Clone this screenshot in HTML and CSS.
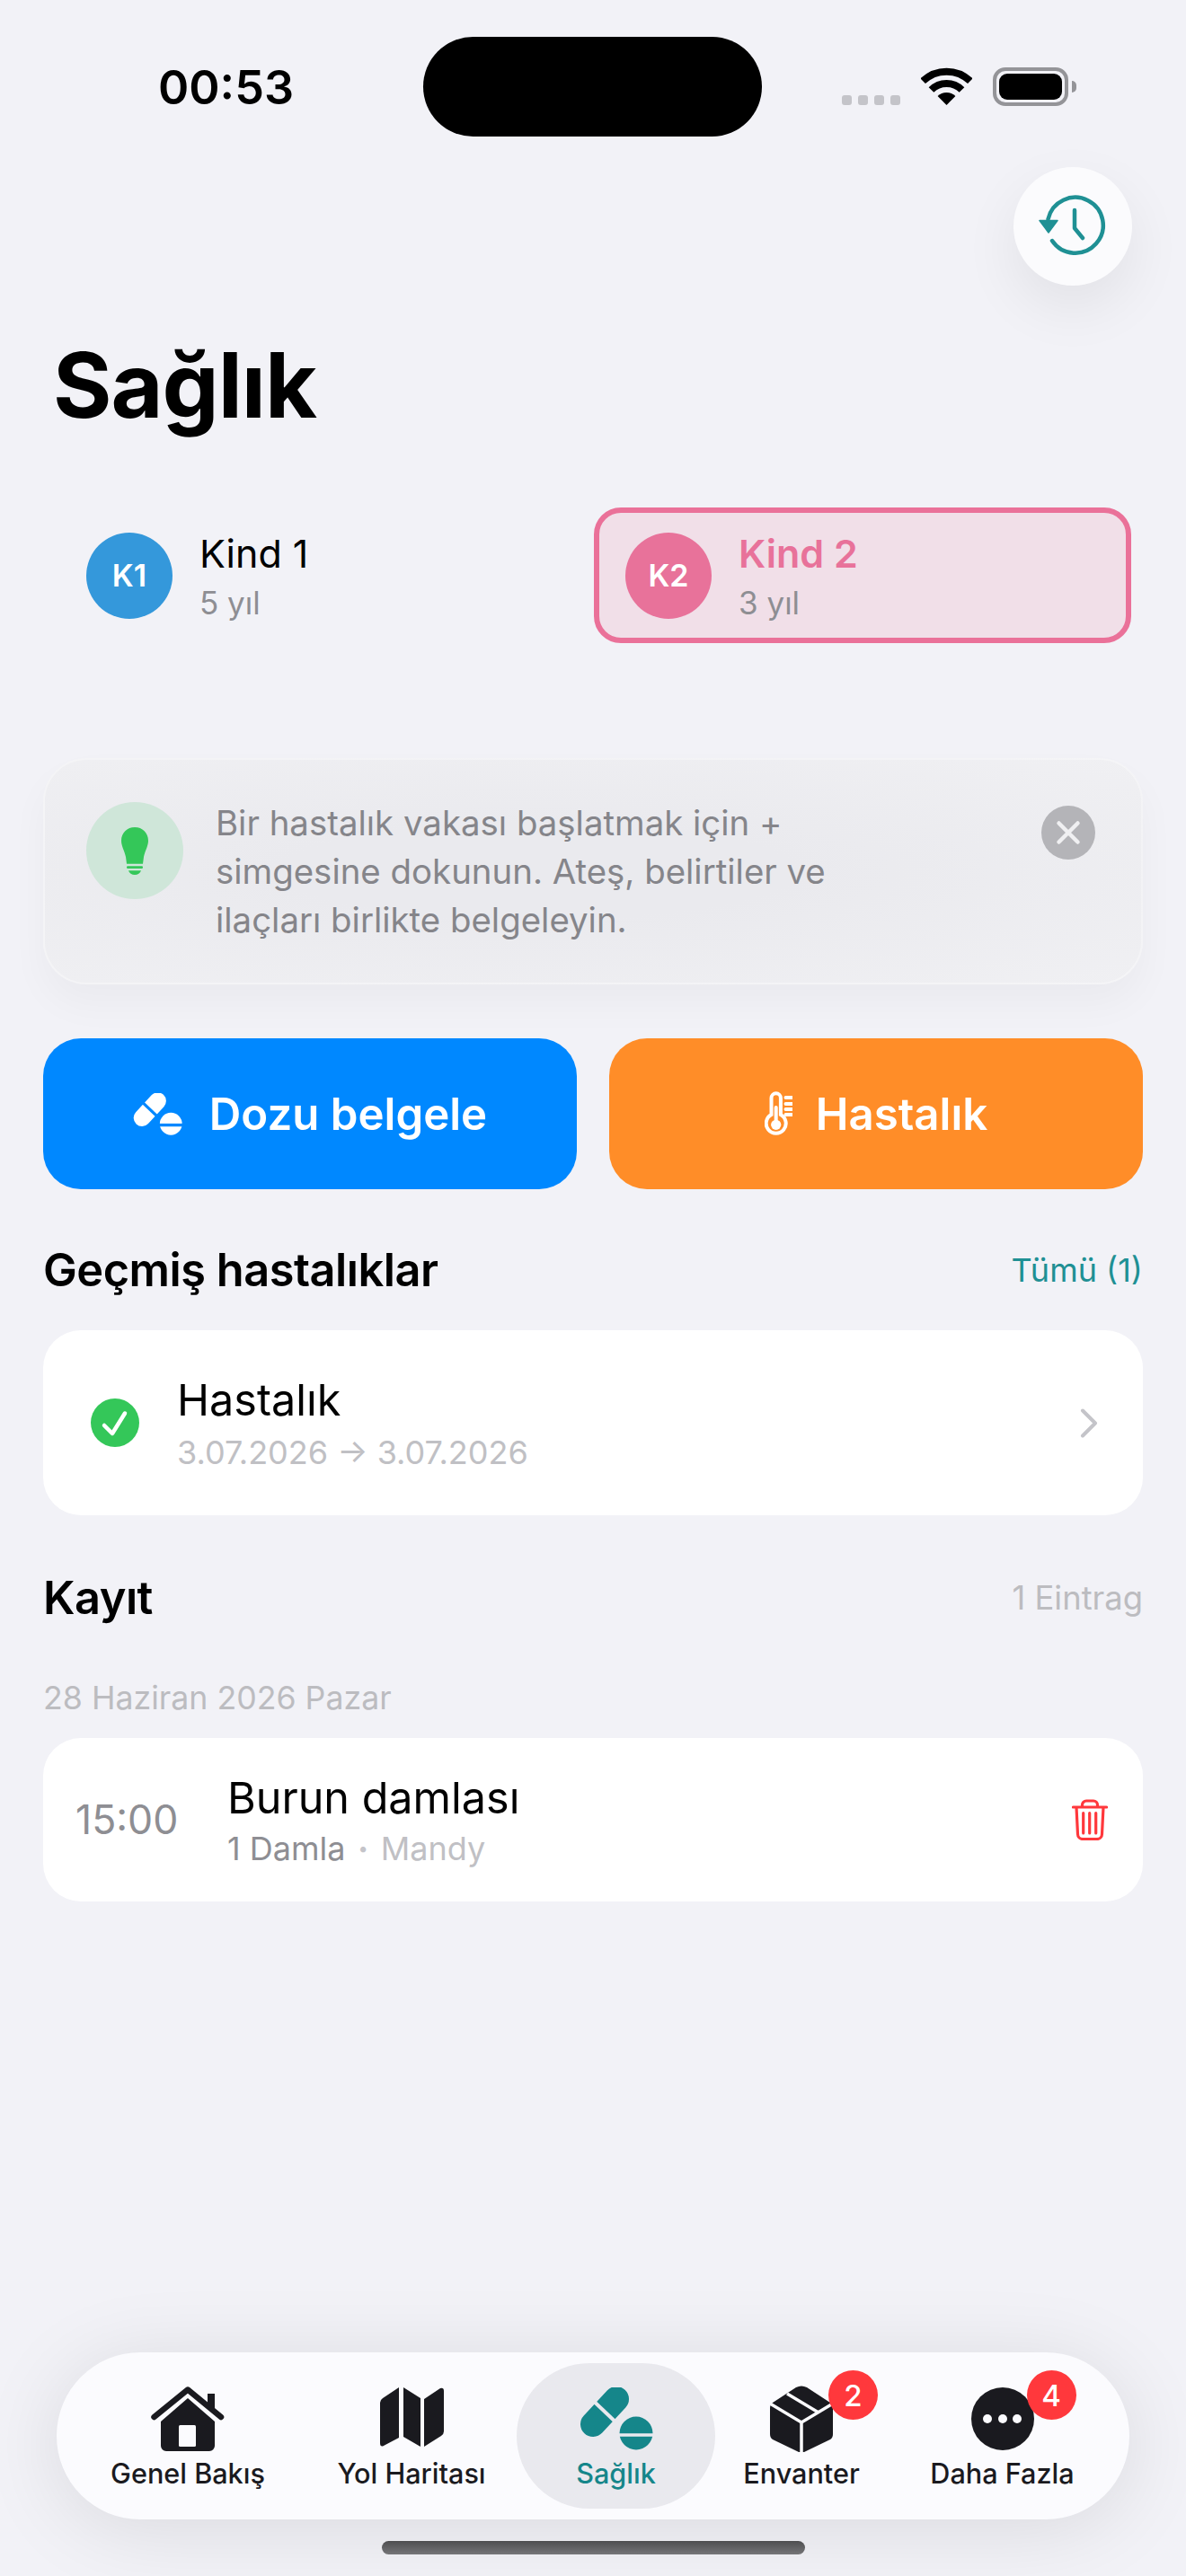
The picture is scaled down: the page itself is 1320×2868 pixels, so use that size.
FILE: index.html
```html
<!DOCTYPE html>
<html lang="tr">
<head>
<meta charset="utf-8">
<title>Sağlık</title>
<link rel="stylesheet" href="styles.css">
</head>
<body>
<div class="screen">
  <div class="island"></div>
  <header class="status">
    <span class="time">00:53</span>
    <div class="status-right">
      <div class="signal"><i></i><i></i><i></i><i></i></div>
      <svg class="wifi" viewBox="0 0 57 42"><path class="wifi-arc" d="M2.2 15.2A38 38 0 0 1 54.8 15.2"/><path class="wifi-arc" d="M11.5 25A24 24 0 0 1 45.5 25"/><path class="wifi-fill" d="M28.5 42L18.6 32A14 14 0 0 1 38.4 32Z"/></svg>
      <div class="battery"><div class="battery-level"></div></div>
      <div class="battery-cap"></div>
    </div>
  </header>

  <div class="history-row">
    <button class="history-btn">
      <svg class="history-icon" viewBox="0 0 80 80"><path class="hist-line" d="M17 56A31 31 0 1 0 12.5 32"/><path class="hist-head" d="M3 33.500H23L13 47Z"/><path class="hist-line" d="M42 22V42L51 53"/></svg>
    </button>
  </div>

  <h1 class="title">Sağlık</h1>

  <div class="kids">
    <div class="kid">
      <div class="avatar avatar-blue">K1</div>
      <div class="kid-text"><div class="kid-name">Kind 1</div><div class="kid-age">5 yıl</div></div>
    </div>
    <div class="kid kid-active">
      <div class="avatar avatar-pink">K2</div>
      <div class="kid-text"><div class="kid-name kid-name-active">Kind 2</div><div class="kid-age">3 yıl</div></div>
    </div>
  </div>

  <main class="content">
    <section class="hint">
      <div class="hint-icon">
        <svg class="bulb" viewBox="0 0 30 53"><path d="M15 0C23.500 0 30 6.200 30 15C30 21 26.500 26 25 33L24 40.700H6L5 33C3.500 26 0 21 0 15C0 6.200 6.500 0 15 0Z"/><rect x="6" y="43.200" width="18" height="2.800" rx="1.200"/><path d="M8 48.200H22C21 51.400 18.400 53 15 53C11.600 53 9 51.400 8 48.200Z"/></svg>
      </div>
      <p class="hint-text">Bir hastalık vakası başlatmak için +<br>simgesine dokunun. Ateş, belirtiler ve<br>ilaçları birlikte belgeleyin.</p>
      <div class="hint-close">
        <svg viewBox="0 0 30 30" class="close-x"><path d="M4.500 4.500L25.500 25.500M25.500 4.500L4.500 25.500"/></svg>
      </div>
    </section>

    <div class="actions">
      <button class="action action-blue">
        <svg class="action-pills" viewBox="0 0 82 70"><path class="pill-white" d="M15 41L41 13"/><path class="pill-gap-blue" d="M8 8L48 46"/><circle class="pill-dot-white" cx="63" cy="51" r="18.500"/><path class="pill-gap-blue" d="M42 53H84"/></svg>
        <span>Dozu belgele</span>
      </button>
      <button class="action action-orange">
        <svg class="action-thermo" viewBox="0 0 31 50"><path class="thermo-line" d="M7.500 26V7.500a5.200 5.200 0 0 1 10.400 0V26A11 11 0 1 1 7.500 26Z"/><circle class="thermo-fill" cx="12.700" cy="37.300" r="5.600"/><path class="thermo-line" d="M12.700 18V36M23.500 7H31M23.500 14H31M23.500 20H31M23.500 26H31"/></svg>
        <span>Hastalık</span>
      </button>
    </div>

    <div class="sec-head sec-head-first">
      <h2 class="sec-title">Geçmiş hastalıklar</h2>
      <span class="sec-link">Tümü (1)</span>
    </div>
    <div class="card illness">
      <svg class="check" viewBox="0 0 54 54"><circle cx="27" cy="27" r="27"/><path d="M15 30L24 39L38 16.500"/></svg>
      <div class="illness-text">
        <div class="card-title">Hastalık</div>
        <div class="illness-dates">3.07.2026 → 3.07.2026</div>
      </div>
      <svg class="chevron" viewBox="0 0 20 33"><path d="M3 2.500L17 16.500L3 30.500"/></svg>
    </div>

    <div class="sec-head sec-head-log">
      <h2 class="sec-title">Kayıt</h2>
      <span class="sec-count">1 Eintrag</span>
    </div>
    <div class="log-date">28 Haziran 2026 Pazar</div>
    <div class="card log">
      <div class="log-time">15:00</div>
      <div class="log-text">
        <div class="card-title">Burun damlası</div>
        <div class="log-meta"><span class="log-dose">1 Damla</span><span class="log-dot">•</span><span class="log-who">Mandy</span></div>
      </div>
      <svg class="trash" viewBox="0 0 40 46"><path d="M1.500 9H38.500M11.500 9V6.500a4.500 4.500 0 0 1 4.500-4.500h8a4.500 4.500 0 0 1 4.500 4.500V9M5 9L6.500 39a5.500 5.500 0 0 0 5.500 5.500H28a5.500 5.500 0 0 0 5.500-5.500L35 9M12.700 15.500V38M19.700 15.500V38M26.700 15.500V38"/></svg>
    </div>
  </main>

  <nav class="tabbar">
    <div class="tab">
      <svg class="tab-icon icon-home" viewBox="0 0 82 72"><path class="home-roof" d="M3.500 34L41 3.500L78 34"/><path class="tab-fill" d="M63 8h8v18l-8-6.500ZM41 13L71 39V66a6 6 0 0 1-6 6H17a6 6 0 0 1-6-6V39Z"/><rect class="home-door" x="31" y="43" width="19" height="24" rx="1.500"/></svg>
      <span class="tab-label">Genel Bakış</span>
    </div>
    <div class="tab">
      <svg class="tab-icon icon-map" viewBox="0 0 71 66"><path class="tab-fill" d="M21 0V56L3 65.500Q0 66 0 62V17Q0 14 3 12ZM26 0L45 12V66L26 55ZM49 13L67 1Q71 0 71 4V49Q71 52 68 54L49 66Z"/></svg>
      <span class="tab-label">Yol Haritası</span>
    </div>
    <div class="tab tab-active">
      <svg class="tab-icon icon-pills" viewBox="0 0 82 70"><path class="pill-teal" d="M15 41L41 13"/><path class="pill-gap-gray" d="M8 8L48 46"/><circle class="pill-dot-teal" cx="63" cy="51" r="18.500"/><path class="pill-gap-gray-thin" d="M42 53H84"/></svg>
      <span class="tab-label">Sağlık</span>
    </div>
    <div class="tab">
      <span class="tab-icon-wrap">
        <svg class="tab-icon icon-box" viewBox="0 0 70 74"><path class="tab-fill" d="M29 2Q35 -1 41 2L67 19Q70 21 70 25V54Q70 58 67 60L38 74H32L3 60Q0 58 0 54V25Q0 21 3 19Z"/><path class="box-line" d="M0 20L35 41L70 20M35 41V74M19 9L54 30"/></svg>
        <span class="badge badge-box">2</span>
      </span>
      <span class="tab-label">Envanter</span>
    </div>
    <div class="tab">
      <span class="tab-icon-wrap">
        <svg class="tab-icon icon-more" viewBox="0 0 70 70"><circle class="tab-fill" cx="35" cy="35" r="35"/><circle class="more-dot" cx="18" cy="35" r="5"/><circle class="more-dot" cx="35" cy="35" r="5"/><circle class="more-dot" cx="51" cy="35" r="5"/></svg>
        <span class="badge badge-more">4</span>
      </span>
      <span class="tab-label">Daha Fazla</span>
    </div>
  </nav>
  <div class="home-indicator"></div>
</div>
</body>
</html>
```

FILE: styles.css
```css
* { box-sizing: border-box; margin: 0; padding: 0; }
html, body { width: 1320px; height: 2868px; overflow: hidden; }
body { font-family: Inter, "Liberation Sans", sans-serif; background: #f2f2f7; color: #000; }
button { border: 0; font: inherit; color: inherit; }

.screen { position: relative; width: 1320px; height: 2868px; overflow: hidden; background: #f2f2f7; }

.island { position: absolute; left: 471px; top: 41px; width: 377px; height: 111px; border-radius: 56px; background: #000; }

.status { height: 186px; padding: 74px 122px 0 176px; display: flex; justify-content: space-between; align-items: flex-start; }
.time { font-size: 52px; line-height: 48px; font-weight: 600; letter-spacing: 0; }
.status-right { display: flex; align-items: flex-end; height: 44px; }
.signal { display: flex; gap: 7px; margin-right: 23px; margin-bottom: 1px; }
.signal i { display: block; width: 11px; height: 11px; border-radius: 3px; background: #c4c4c9; }
.wifi { width: 57px; height: 42px; margin-right: 23px; margin-bottom: 1px; }
.wifi-arc { fill: none; stroke: #000; stroke-width: 8; }
.wifi-fill { fill: #000; }
.battery { width: 84px; height: 43px; border: 4px solid #949498; border-radius: 14px; padding: 3px; }
.battery-level { width: 100%; height: 100%; background: #000; border-radius: 9px; }
.battery-cap { width: 5px; height: 13px; margin: 0 0 15px 4px; background: #949498; border-radius: 0 5px 5px 0; }

.history-row { display: flex; justify-content: flex-end; padding-right: 60px; }
.history-btn { width: 132px; height: 132px; border-radius: 50%; background: #fbfbfd; box-shadow: 0 24px 64px rgba(0,0,0,.07); display: flex; align-items: center; justify-content: center; }
.history-icon { width: 80px; height: 80px; }
.hist-line { fill: none; stroke: #1f9094; stroke-width: 4.500; stroke-linecap: round; stroke-linejoin: round; }
.hist-head { fill: #1f9094; stroke: #1f9094; stroke-width: 1.500; stroke-linejoin: round; }

.title { margin: 53px 0 0 59px; font-size: 100px; line-height: 116px; font-weight: 700; letter-spacing: -1px; height: 116px; }

.kids { margin-top: 78px; padding: 0 61px; display: grid; grid-template-columns: 580px 598px; gap: 20px; }
.kid { height: 151px; padding: 0 35px; display: flex; align-items: center; gap: 30px; border-radius: 30px; }
.kid-active { background: #f1dfe8; border: 6px solid #ea7199; padding: 0 29px; }
.avatar { width: 96px; height: 96px; border-radius: 50%; color: #fff; font-size: 34px; font-weight: 600; display: flex; align-items: center; justify-content: center; flex: none; }
.avatar-blue { background: #3498db; }
.avatar-pink { background: #e8729a; }
.kid-name { font-size: 43px; line-height: 52px; font-weight: 400; }
.kid-name-active { color: #e8729a; font-weight: 600; }
.kid-age { font-size: 35px; line-height: 42px; margin-top: 8px; color: #8e8e93; }

.content { padding: 0 48px; margin-top: 128px; }

.hint { height: 252px; border-radius: 48px; border: 2px solid rgba(255,255,255,.35); background: radial-gradient(ellipse at 45% 50%, #eaeaee 30%, #f0f0f3 100%); box-shadow: 0 22px 44px rgba(0,0,0,.035); padding: 47px 51px 0 46px; display: flex; align-items: flex-start; }
.hint-icon { width: 108px; height: 108px; border-radius: 50%; background: #cfe6d9; display: flex; align-items: center; justify-content: center; flex: none; }
.bulb { width: 30px; height: 53px; fill: #34c759; }
.hint-text { margin: -4px 0 0 36px; flex: 1; font-size: 38.400px; line-height: 54px; color: #85858a; }
.hint-close { width: 60px; height: 60px; border-radius: 50%; background: #b4b4b8; display: flex; align-items: center; justify-content: center; flex: none; margin-top: 4px; }
.close-x { width: 30px; height: 30px; fill: none; stroke: #f0f0f2; stroke-width: 4.500; stroke-linecap: round; }

.actions { margin-top: 60px; display: grid; grid-template-columns: 594px 594px; gap: 36px; }
.action { height: 168px; border-radius: 42px; color: #fff; font-size: 49.200px; font-weight: 600; display: flex; align-items: center; justify-content: center; gap: 30px; }
.action-blue { background: #0088ff; }
.action-orange { background: #ff8d28; gap: 26px; }
.action-pills { width: 55px; height: 47px; }
.action-thermo { width: 31px; height: 50px; }
.pill-white { fill: none; stroke: #fff; stroke-width: 28; stroke-linecap: round; }
.pill-dot-white { fill: #fff; }
.pill-gap-blue { fill: none; stroke: #0088ff; stroke-width: 5; }
.thermo-line { fill: none; stroke: #fff; stroke-width: 4; stroke-linecap: round; }
.thermo-fill { fill: #fff; }

.sec-head { display: flex; justify-content: space-between; align-items: center; height: 60px; }
.sec-head-first { margin-top: 60px; }
.sec-head-log { margin-top: 62px; }
.sec-title { font-size: 50.500px; line-height: 60px; font-weight: 600; letter-spacing: -0.5px; }
.sec-link { font-size: 36px; color: #1f9094; }
.sec-count { font-size: 36.400px; color: #bcbcc0; }

.card { background: #fff; border-radius: 42px; display: flex; align-items: center; }
.illness { margin-top: 37px; height: 206px; padding: 0 50px 0 53px; }
.check { width: 54px; height: 54px; flex: none; }
.check circle { fill: #34c759; }
.check path { fill: none; stroke: #fff; stroke-width: 4.500; stroke-linecap: round; stroke-linejoin: round; }
.illness-text { flex: 1; margin-left: 42px; padding-top: 1px; }
.card-title { font-size: 48.500px; line-height: 58px; font-weight: 400; }
.illness-dates { font-size: 36px; line-height: 44px; margin-top: 7px; color: #c0c0c4; }
.chevron { width: 20px; height: 33px; fill: none; stroke: #c4c4c9; stroke-width: 4; stroke-linecap: round; stroke-linejoin: round; }

.log-date { margin-top: 59px; font-size: 35.700px; line-height: 44px; color: #bcbcc0; }
.log { margin-top: 23px; height: 182px; padding: 0 39px 0 36px; }
.log-time { width: 169px; font-size: 44.600px; color: #8e8e93; flex: none; }
.log-text { flex: 1; }
.log-meta { font-size: 36px; line-height: 42px; margin-top: 6px; display: flex; align-items: center; }
.log-dose { color: #8e8e93; }
.log-dot { color: #c4c4c9; font-size: 20px; margin: 0 14px; }
.log-who { color: #c0c0c4; }
.trash { width: 40px; height: 46px; fill: none; stroke: #ff383c; stroke-width: 3.200; stroke-linecap: round; stroke-linejoin: round; }

.tabbar { position: absolute; left: 63px; top: 2619px; width: 1194px; height: 186px; padding: 12px 14px; border-radius: 93px; background: #fbfbfe; box-shadow: 0 10px 90px rgba(0,0,0,.1); display: grid; grid-template-columns: 264px 234px 221px 192px 255px; }
.tab { height: 162px; border-radius: 81px; display: flex; flex-direction: column; align-items: center; justify-content: flex-end; padding-bottom: 21px; color: #1a1a1f; }
.tab-active { background: #e9e9ee; color: #15868a; }
.tab-label { font-size: 30.600px; line-height: 36px; font-weight: 500; margin-top: 5px; }
.tab-icon { display: block; }
.tab-fill { fill: #1a1a1f; }
.icon-home { width: 82px; height: 72px; margin-bottom: 2px; }
.home-roof { fill: none; stroke: #1a1a1f; stroke-width: 6.500; stroke-linecap: round; stroke-linejoin: round; }
.home-door { fill: #fbfbfe; }
.icon-map { width: 71px; height: 66px; margin-bottom: 7px; }
.icon-pills { width: 82px; height: 70px; margin-bottom: 3px; }
.pill-teal { fill: none; stroke: #15868a; stroke-width: 28; stroke-linecap: round; }
.pill-dot-teal { fill: #15868a; }
.pill-gap-gray { fill: none; stroke: #e9e9ee; stroke-width: 4; }
.pill-gap-gray-thin { fill: none; stroke: #e9e9ee; stroke-width: 3.500; }
.tab-icon-wrap { position: relative; display: block; }
.icon-box { width: 70px; height: 74px; margin-bottom: 1px; }
.box-line { fill: none; stroke: #fbfbfe; stroke-width: 3.500; }
.icon-more { width: 70px; height: 70px; margin-bottom: 3px; }
.more-dot { fill: #fbfbfe; }
.badge { position: absolute; width: 55px; height: 55px; border-radius: 50%; background: #ff383c; color: #fff; font-size: 33px; font-weight: 500; display: flex; align-items: center; justify-content: center; }
.badge-box { left: 65px; top: -17px; }
.badge-more { left: 62px; top: -19px; }

.home-indicator { position: absolute; left: 425px; top: 2829px; width: 471px; height: 15px; border-radius: 8px; background: linear-gradient(#4e4e50, #757578); }
```
